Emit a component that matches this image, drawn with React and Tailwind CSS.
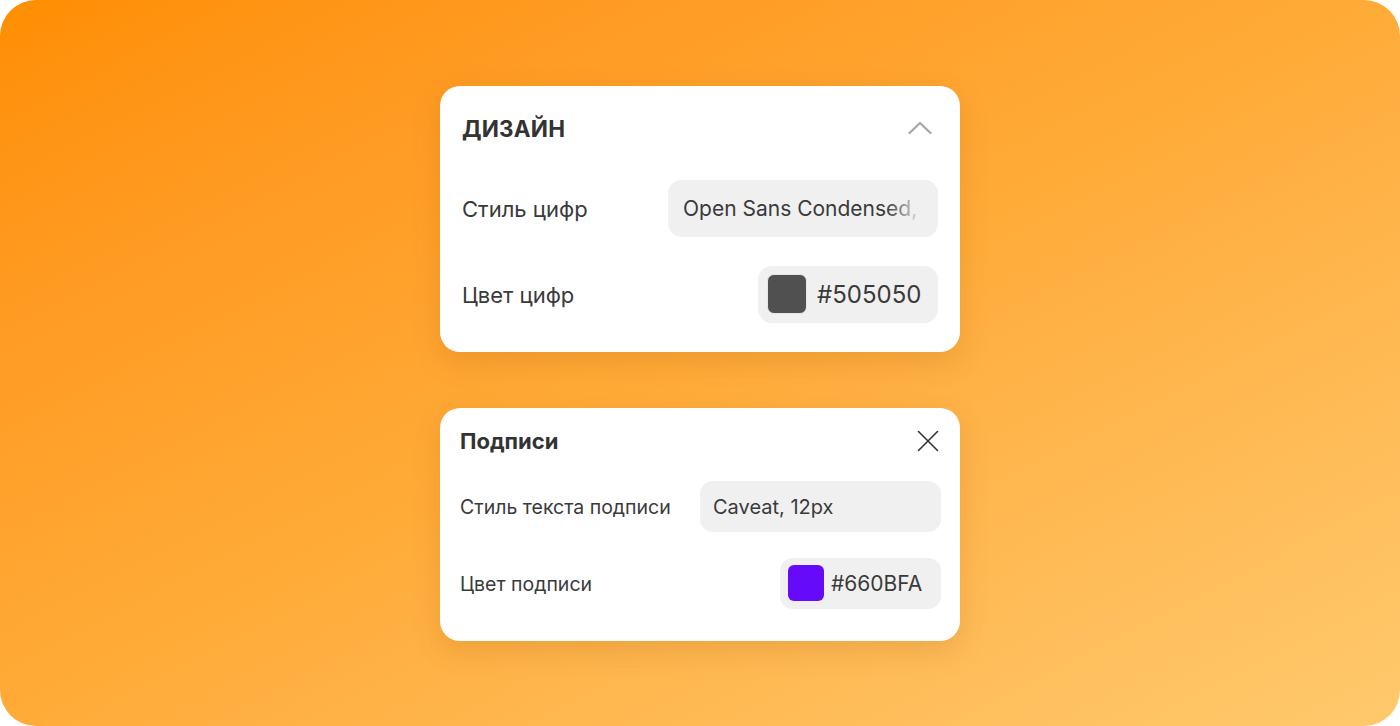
import React from 'react';

const font = { fontFamily: 'Inter, "Noto Sans", sans-serif' };

function Chevron() {
  return (
    <svg width="24" height="14" viewBox="0 0 24 14" fill="none">
      <path d="M1.5 12 L12 2 L22.5 12" stroke="#a6a6a6" strokeWidth="2.2" strokeLinecap="round" strokeLinejoin="round" />
    </svg>
  );
}

function Cross() {
  return (
    <svg width="22" height="22" viewBox="0 0 22 22" fill="none">
      <path d="M1.5 1.5 L20.5 20.5 M20.5 1.5 L1.5 20.5" stroke="#333" strokeWidth="1.6" strokeLinecap="round" />
    </svg>
  );
}

export default function App() {
  return (
    <div className="w-[1400px] h-[726px] bg-white" style={font}>
      <div className="w-full h-full rounded-[36px] bg-gradient-to-br from-[#ff8e00] via-[#ffab38] to-[#ffc96c] flex flex-col items-center justify-center gap-[56px]">
        {/* design card */}
        <div className="w-[520px] bg-white rounded-[20px] shadow-[0_10px_30px_rgba(140,70,0,0.16)] px-[22px] pt-[28px] pb-[29px] text-[#333]">
          <div className="h-[30px] flex items-center justify-between">
            <span className="text-[22.5px] font-bold tracking-[0.2px] uppercase mt-[1px]">Дизайн</span>
            <span className="mr-[6px] mt-[-2px]"><Chevron /></span>
          </div>
          <div className="mt-[36px] flex items-center justify-between h-[57px]">
            <span className="text-[22px] text-[#3a3a3a] mt-[2px]">Стиль цифр</span>
            <div className="relative w-[270px] h-[57px] rounded-[14px] bg-[#f0f0f0] flex items-center pl-[15px] overflow-hidden">
              <span className="text-[21px] text-[#3a3a3a] whitespace-nowrap mt-[2px]">Open Sans Condensed,</span>
              <div className="absolute right-0 top-0 h-full w-[52px] bg-gradient-to-l from-[#f0f0f0] from-[30%] to-[#f0f0f0]/0" />
            </div>
          </div>
          <div className="mt-[29px] flex items-center justify-between h-[57px]">
            <span className="text-[22px] text-[#3a3a3a] mt-[2px]">Цвет цифр</span>
            <div className="w-[180px] h-[57px] rounded-[14px] bg-[#f0f0f0] flex items-center pl-[9px] gap-[10px]">
              <div className="w-[40px] h-[40px] rounded-[7px] bg-[#505050] border border-[#e6e6e6]" />
              <span className="text-[24px] text-[#3a3a3a] mt-[1px]">#505050</span>
            </div>
          </div>
        </div>

        {/* captions card */}
        <div className="w-[520px] bg-white rounded-[20px] shadow-[0_10px_30px_rgba(140,70,0,0.16)] pl-[20px] pr-[19px] pt-[19px] pb-[32px] text-[#333]">
          <div className="h-[28px] flex items-center justify-between">
            <span className="text-[22px] font-bold mt-[2px]">Подписи</span>
            <span className="mr-[2px]"><Cross /></span>
          </div>
          <div className="mt-[26px] flex items-center justify-between h-[51px]">
            <span className="text-[19.5px] text-[#3a3a3a] mt-[3px]">Стиль текста подписи</span>
            <div className="w-[241px] h-[51px] rounded-[13px] bg-[#f0f0f0] flex items-center pl-[13px]">
              <span className="text-[20px] text-[#3a3a3a] mt-[2px]">Caveat, 12px</span>
            </div>
          </div>
          <div className="mt-[26px] flex items-center justify-between h-[51px]">
            <span className="text-[19.5px] text-[#3a3a3a] mt-[3px]">Цвет подписи</span>
            <div className="w-[161px] h-[51px] rounded-[13px] bg-[#f0f0f0] flex items-center pl-[8px] gap-[7px]">
              <div className="w-[36px] h-[36px] rounded-[6px] bg-[#660bfa]" />
              <span className="text-[21px] text-[#3a3a3a] mt-[2px]">#660BFA</span>
            </div>
          </div>
        </div>
      </div>
    </div>
  );
}
